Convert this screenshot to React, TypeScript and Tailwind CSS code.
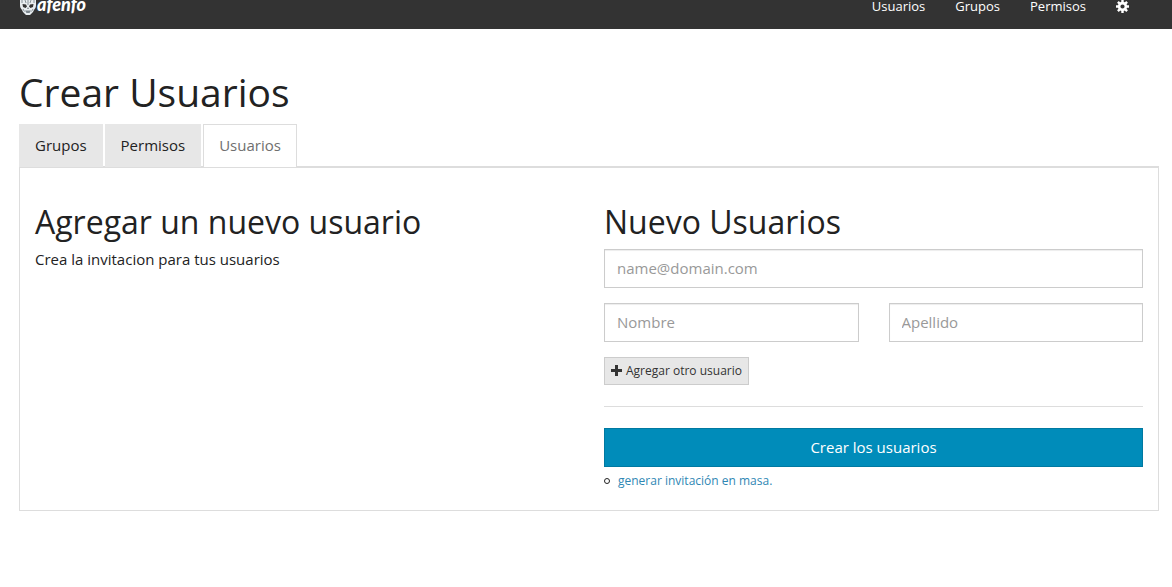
const fieldClass =
  'block h-[39px] w-full min-w-0 border border-[#cccccc] bg-white px-3 pb-0.5 text-[15px] text-[#6f6f6f] shadow-[inset_0_1px_1px_rgba(0,0,0,0.075)] outline-none placeholder:text-[#999999] placeholder:opacity-100 focus:border-[#66afe9]';

const tabClass = 'border border-b-0 px-[15px] pt-[10px] pb-[11px]';

function SkullIcon() {
  return (
    <svg viewBox="0 0 18 16" className="h-4 w-[18px] shrink-0" aria-hidden="true">
      <path d="M1 0h16v5c0 2-.6 3.500-2 5l-1 2-3 3H7l-3-3-1-2C1.600 8.500 1 7 1 5z" fill="#e8edf0" />
      <path d="M3.500 4l3.500.5L8 6.500 6.500 8 4 7zM14.500 4l-3.500.5L10 6.500 11.500 8l2.500-1z" fill="#333333" />
      <path d="M9 7l1 2H8zM6 10.500h6l-1.500 2.500h-3z" fill="#7b858c" />
      <path d="M3 0v3M6 0l1 3M12 0l-1 3M15 0v3M9 0v5M4 9l1.500 2.500M14 9l-1.500 2.500" stroke="#6f7b83" strokeWidth="0.8" fill="none" />
    </svg>
  );
}

function CogIcon() {
  return (
    <svg viewBox="0 0 13 13" className="size-[13px] shrink-0" fill="none" stroke="currentColor" aria-hidden="true">
      <circle cx="6.5" cy="6.5" r="3.400" strokeWidth="2.600" />
      <path
        d="M6.500 0v2.500M6.500 10.500V13M0 6.500h2.500M10.500 6.500H13M1.900 1.900l1.800 1.800M9.300 9.300l1.800 1.800M1.900 11.100l1.800-1.800M9.300 3.700l1.800-1.800"
        strokeWidth="2.400"
      />
    </svg>
  );
}

function PlusIcon() {
  return (
    <svg viewBox="0 0 12 12" className="size-3 shrink-0" aria-hidden="true">
      <path d="M4 0h3v4h4v3H7v4H4V7H0V4h4z" fill="currentColor" />
    </svg>
  );
}

function Navbar() {
  return (
    <header className="flex h-[29px] items-start justify-between bg-[#333333] pr-[43px] pl-[19px] text-white">
      <a href="#inicio" className="flex items-start">
        <SkullIcon />
        <span className="-mt-1.5 font-['Lato',sans-serif] text-lg leading-5 font-black italic">afenfo</span>
      </a>
      <nav className="flex items-center gap-[30px] text-[13px] leading-[13px]">
        <a href="#usuarios">Usuarios</a>
        <a href="#grupos">Grupos</a>
        <a href="#permisos">Permisos</a>
        <a href="#ajustes" aria-label="Ajustes">
          <CogIcon />
        </a>
      </nav>
    </header>
  );
}

function Tabs() {
  return (
    <nav className="-mb-px flex gap-0.5 text-[15px] leading-[21px]">
      <a href="#grupos" className={`${tabClass} border-[#e7e7e7] bg-[#e7e7e7]`}>
        Grupos
      </a>
      <a href="#permisos" className={`${tabClass} border-[#e7e7e7] bg-[#e7e7e7]`}>
        Permisos
      </a>
      <a href="#usuarios" aria-current="page" className={`${tabClass} z-10 border-[#dddddd] bg-white text-[#6f6f6f]`}>
        Usuarios
      </a>
    </nav>
  );
}

export default function App() {
  return (
    <div className="min-h-screen bg-white font-['Open_Sans',sans-serif] text-[15px] text-[#222222]">
      <Navbar />
      <main className="pt-10 pr-[13px] pl-[19px]">
        <h1 className="mb-2.5 text-[39px] leading-[45px]">Crear Usuarios</h1>
        <Tabs />
        <section className="grid grid-cols-2 gap-[30px] border border-t-2 border-[#dddddd] px-[15px] pt-[35px] pb-5">
          <div>
            <h2 className="mb-[9px] text-[32px] leading-[37px]">Agregar un nuevo usuario</h2>
            <p className="leading-[21px]">Crea la invitacion para tus usuarios</p>
          </div>
          <form onSubmit={(e) => e.preventDefault()}>
            <h2 className="mb-[9px] text-[32px] leading-[37px]">Nuevo Usuarios</h2>
            <input type="email" aria-label="Correo" placeholder="name@domain.com" className={fieldClass} />
            <div className="mt-[15px] grid grid-cols-2 gap-[30px]">
              <input type="text" aria-label="Nombre" placeholder="Nombre" className={fieldClass} />
              <input type="text" aria-label="Apellido" placeholder="Apellido" className={fieldClass} />
            </div>
            <button
              type="button"
              className="mt-[15px] flex h-7 items-center gap-[3px] border border-[#cccccc] bg-[#e7e7e7] px-1.5 text-xs text-[#333333]"
            >
              <PlusIcon />
              Agregar otro usuario
            </button>
            <hr className="my-[21px] border-[#dddddd]" />
            <button
              type="submit"
              className="block h-[39px] w-full border border-[#0079a1] bg-[#008cba] text-[15px] text-white"
            >
              Crear los usuarios
            </button>
            <ul className="mt-[5px] text-xs leading-[18px]">
              <li className="flex items-center gap-2">
                <span className="size-1.5 rounded-full border border-[#222222]" />
                <a href="#invitacion" className="text-[#2f87b4]">
                  generar invitación en masa.
                </a>
              </li>
            </ul>
          </form>
        </section>
      </main>
    </div>
  );
}
